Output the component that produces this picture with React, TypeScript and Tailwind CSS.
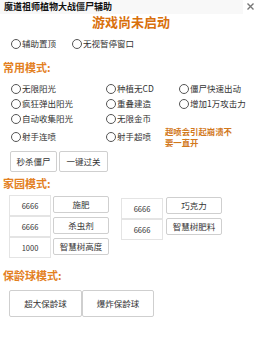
import React from "react";

const font = { fontFamily: '"Noto Sans CJK SC", "Noto Sans", sans-serif' };

function Radio({ label }: { label: string }) {
  return (
    <div className="flex items-center h-[15px] whitespace-nowrap">
      <span className="w-[10px] h-[10px] rounded-full border border-[#555] bg-white shrink-0" />
      <span className="ml-[1px] text-[8.5px] leading-[15px] text-[#333]">{label}</span>
    </div>
  );
}

function Btn({ label, w, h, cls = "" }: { label: string; w: string; h: string; cls?: string }) {
  return (
    <div
      className={`flex items-center justify-center rounded-[2px] border border-[#cfcfcf] bg-white text-[8.5px] text-[#333] ${w} ${h} ${cls}`}
    >
      {label}
    </div>
  );
}

function InputBox({ value }: { value: string }) {
  return (
    <div className="w-[42px] h-[21px] border border-[#e4e4e4] bg-white flex items-center justify-center text-[7.5px] text-[#333]">
      {value}
    </div>
  );
}

export default function App() {
  return (
    <div className="w-[262px] h-[360px] bg-white overflow-hidden relative" style={font}>
      {/* title bar */}
      <div className="flex h-[14px]">
        <div className="w-[243px] h-[14px] bg-[#f8f8f8] pl-[4px] text-[9px] leading-[14px] font-bold text-[#111]">
          魔道祖师植物大战僵尸辅助
        </div>
        <div className="flex-1 flex items-start justify-start pl-[4px] pt-[3px]">
          <svg width="7" height="7" viewBox="0 0 7 7">
            <path d="M0.5 0.5 L6.5 6.5 M6.5 0.5 L0.5 6.5" stroke="#777" strokeWidth="1.4" />
          </svg>
        </div>
      </div>

      {/* status */}
      <div className="h-[16px] text-center text-[13px] leading-[16px] font-bold text-[#d9700c]">
        游戏尚未启动
      </div>

      {/* top radios */}
      <div className="mt-[6px] h-[14px] flex pl-[11px]">
        <div className="w-[61px]">
          <Radio label="辅助置顶" />
        </div>
        <Radio label="无视暂停窗口" />
      </div>

      {/* common */}
      <div className="mt-[10px] h-[14px] pl-[3px] text-[11px] leading-[14px] font-bold text-[#e3801f]">
        常用模式:
      </div>

      <div className="mt-[7px] pl-[11px] grid grid-cols-[95px_73px_1fr]">
        <Radio label="无限阳光" />
        <Radio label="种植无CD" />
        <Radio label="僵尸快速出动" />
        <Radio label="疯狂弹出阳光" />
        <Radio label="重叠建造" />
        <Radio label="增加1万攻击力" />
        <Radio label="自动收集阳光" />
        <Radio label="无限金币" />
        <div />
        <div className="pt-[3px]">
          <Radio label="射手连喷" />
        </div>
        <div className="pt-[3px]">
          <Radio label="射手超喷" />
        </div>
        <div className="ml-[-14px] w-[70px] text-[8.4px] leading-[11px] font-bold text-[#d2781c]">
          超喷会引起崩溃不要一直开
        </div>
      </div>

      <div className="mt-[3px] pl-[10px] flex gap-[2px]">
        <Btn label="秒杀僵尸" w="w-[47px]" h="h-[21px]" />
        <Btn label="一键过关" w="w-[49px]" h="h-[21px]" />
      </div>

      {/* home */}
      <div className="mt-[4px] h-[14px] pl-[3px] text-[11px] leading-[14px] font-bold text-[#e3801f]">
        家园模式:
      </div>

      <div className="mt-[5px] flex">
        <div className="pl-[9px] w-[121px] flex flex-col">
          {[
            ["6666", "施肥"],
            ["6666", "杀虫剂"],
            ["1000", "智慧树高度"],
          ].map(([v, l]) => (
            <div key={l} className="flex items-start h-[21px]">
              <InputBox value={v} />
              <Btn label={l} w="w-[56px]" h="h-[17px]" cls="ml-[2px] mt-[1px]" />
            </div>
          ))}
        </div>
        <div className="mt-[2px] flex flex-col">
          {[
            ["6666", "巧克力"],
            ["6666", "智慧树肥料"],
          ].map(([v, l]) => (
            <div key={l} className="flex items-start h-[21px]">
              <div className="mt-[1px]">
                <InputBox value={v} />
              </div>
              <Btn label={l} w="w-[56px]" h="h-[17px]" cls="ml-[3px]" />
            </div>
          ))}
        </div>
      </div>

      {/* bowling */}
      <div className="mt-[10px] h-[14px] pl-[3px] text-[11px] leading-[14px] font-bold text-[#e3801f]">
        保龄球模式:
      </div>

      <div className="mt-[8px] pl-[9px] flex">
        <Btn label="超大保龄球" w="w-[73px]" h="h-[27px]" />
        <Btn label="爆炸保龄球" w="w-[72px]" h="h-[27px]" />
      </div>
    </div>
  );
}
